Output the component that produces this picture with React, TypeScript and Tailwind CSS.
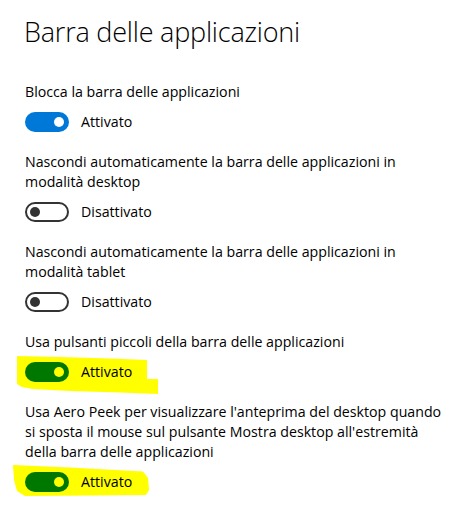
import React from "react";

type ToggleProps = { on: boolean; highlighted?: boolean };

function Toggle({ on, highlighted }: ToggleProps) {
  if (on) {
    const track = highlighted ? "bg-[#007800]" : "bg-[#0078d7]";
    const knob = highlighted ? "bg-[#ffff00]" : "bg-white";
    return (
      <div className={`w-[44px] h-[20px] rounded-full ${track} flex items-center justify-end pr-[5px]`}>
        <div className={`w-[10px] h-[10px] rounded-full ${knob}`} />
      </div>
    );
  }
  return (
    <div className="w-[44px] h-[20px] rounded-full border-2 border-[#333333] flex items-center pl-[3px]">
      <div className="w-[10px] h-[10px] rounded-full bg-[#333333]" />
    </div>
  );
}

function Highlight({ variant }: { variant: 1 | 2 }) {
  if (variant === 1) {
    return (
      <svg
        className="absolute left-[-25px] top-[-8px] w-[170px] h-[45px]"
        viewBox="0 0 170 45"
      >
        <path
          d="M 17 2 L 60 3 L 110 4.5 L 147 6 L 147 25 L 158 25 L 158 40 L 120 38.5 L 70 37 L 33 35 L 22 33 L 17 30 Z"
          fill="#ffff00"
        />
      </svg>
    );
  }
  return (
    <svg
      className="absolute left-[-25px] top-[-8px] w-[170px] h-[45px]"
      viewBox="0 0 170 45"
    >
      <path
        d="M 13 1 L 70 3.5 L 143 7.5 L 148 14 L 149 26 L 146 31 L 90 31.5 L 25 32 L 17 27 L 14 16 Z"
        fill="#ffff00"
      />
    </svg>
  );
}

type Item = {
  label: React.ReactNode;
  on: boolean;
  highlight?: 1 | 2;
};

const items: Item[] = [
  { label: "Blocca la barra delle applicazioni", on: true },
  {
    label: (
      <>
        Nascondi automaticamente la barra delle applicazioni in
        <br />
        modalità desktop
      </>
    ),
    on: false,
  },
  {
    label: (
      <>
        Nascondi automaticamente la barra delle applicazioni in
        <br />
        modalità tablet
      </>
    ),
    on: false,
  },
  { label: "Usa pulsanti piccoli della barra delle applicazioni", on: true, highlight: 1 },
  {
    label: (
      <>
        Usa Aero Peek per visualizzare l'anteprima del desktop quando
        <br />
        si sposta il mouse sul pulsante Mostra desktop all'estremità
        <br />
        della barra delle applicazioni
      </>
    ),
    on: true,
    highlight: 2,
  },
];

export default function App() {
  return (
    <div
      className="w-[463px] h-[506px] bg-white text-black overflow-hidden pl-[25px] pt-[14px]"
      style={{ fontFamily: '"Segoe UI", "Open Sans", "Noto Sans", sans-serif' }}
    >
      <h1 className="text-[27px] leading-[36px] font-light tracking-[-0.2px] ml-[-1px] text-black">
        Barra delle applicazioni
      </h1>
      <div className="mt-[32px] flex flex-col gap-[20px]">
        {items.map((it, i) => (
          <div key={i} className="flex flex-col">
            <div className="text-[14.2px] leading-[20px] whitespace-nowrap">{it.label}</div>
            <div className="relative mt-[10px] flex items-center h-[20px]">
              {it.highlight ? <Highlight variant={it.highlight} /> : null}
              <div className="relative z-10 flex items-center gap-[12px]">
                <Toggle on={it.on} highlighted={!!it.highlight} />
                <span className="text-[14.2px] leading-[20px]">
                  {it.on ? "Attivato" : "Disattivato"}
                </span>
              </div>
            </div>
          </div>
        ))}
      </div>
    </div>
  );
}
